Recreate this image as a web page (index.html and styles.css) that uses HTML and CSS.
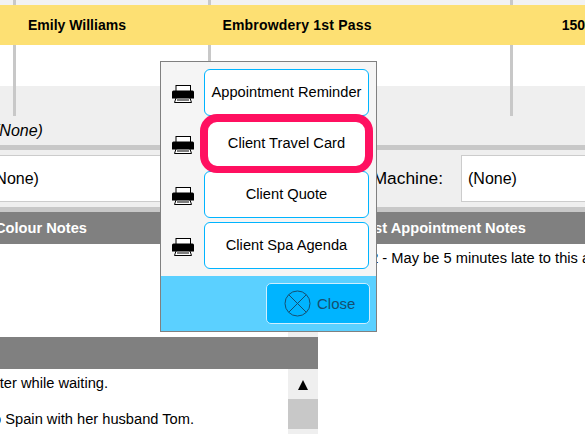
FILE: index.html
```html
<!DOCTYPE html>
<html>
<head>
  <meta charset="utf-8">
  <link rel="stylesheet" href="styles.css">
</head>
<body>
  <svg width="0" height="0" class="defs">
    <symbol id="printer" viewBox="0 0 22 18">
      <rect x="4" y="0.5" width="14.5" height="6" fill="#fff" stroke="#000"/>
      <path d="M1.5 5.5h19a1.5 1.5 0 0 1 1.5 1.5v6.500h-22v-6.500a1.500 1.500 0 0 1 1.500-1.500z" fill="#000"/>
      <path d="M4 13h14l1.500 4.500h-17z" fill="#fff" stroke="#000"/>
      <path d="M5 15h12" stroke="#000" fill="none"/>
    </symbol>
  </svg>

  <div class="page">
    <div class="timeline-line line-1"></div>
    <div class="timeline-line line-2"></div>
    <div class="timeline-line line-3"></div>

    <div class="top-strip"></div>
    <div class="appointment-band">
      <div class="band-client">Emily Williams</div>
      <div class="band-service">Embrowdery 1st Pass</div>
      <div class="band-mins">150</div>
    </div>
    <div class="white-gap"></div>

    <div class="info-panel">
      <div class="info-value">(None)</div>
    </div>

    <div class="field-row">
      <div class="field-box field-left">(None)</div>
      <div class="field-label">Machine:</div>
      <div class="field-box field-right">(None)</div>
    </div>

    <div class="notes-grid">
      <div class="notes-col">
        <div class="notes-header colour-header">Colour Notes</div>
        <div class="notes-body">
          <div class="scroll-track"></div>
        </div>
        <div class="notes-header"></div>
        <div class="notes-list">
          <div class="list-text">
            <p class="list-first">water while waiting.</p>
            <p>to Spain with her husband Tom.</p>
          </div>
          <div class="scroll-track">
            <div class="scroll-arrow"></div>
            <div class="scroll-thumb"></div>
          </div>
        </div>
      </div>
      <div class="notes-col">
        <div class="notes-header last-header">Last Appointment Notes</div>
        <div class="last-text">12 - May be 5 minutes late to this appointment</div>
      </div>
    </div>

    <div class="print-dialog">
      <div class="print-rows">
        <div class="print-row">
          <svg class="printer-icon"><use href="#printer"/></svg>
          <div class="print-btn">Appointment Reminder</div>
        </div>
        <div class="print-row">
          <svg class="printer-icon"><use href="#printer"/></svg>
          <div class="print-btn">Client Travel Card</div>
        </div>
        <div class="print-row">
          <svg class="printer-icon"><use href="#printer"/></svg>
          <div class="print-btn">Client Quote</div>
        </div>
        <div class="print-row">
          <svg class="printer-icon"><use href="#printer"/></svg>
          <div class="print-btn">Client Spa Agenda</div>
        </div>
      </div>
      <div class="dialog-footer">
        <div class="close-btn">
          <svg class="close-icon" viewBox="0 0 27 27">
            <circle cx="13.5" cy="13.5" r="12.5" fill="none" stroke="#164f70" stroke-width="1"/>
            <path d="M4.7 4.7l17.6 17.6M22.3 4.7l-17.6 17.6" fill="none" stroke="#164f70" stroke-width="1"/>
          </svg>
          <span>Close</span>
        </div>
      </div>
    </div>

    <div class="highlight"></div>
  </div>
</body>
</html>
```

FILE: styles.css
```css
* {
  margin: 0;
  padding: 0;
  box-sizing: border-box;
}

body {
  width: 585px;
  height: 434px;
  overflow: hidden;
  font-family: 'Liberation Sans', Arial, sans-serif;
  color: #000;
  background: #fff;
}

.defs {
  display: block;
  height: 0;
}

.page {
  position: relative;
  width: 585px;
  height: 434px;
  overflow: hidden;
}

.timeline-line {
  position: absolute;
  top: 0;
  width: 3px;
  height: 116px;
  background: #c8c8c8;
  z-index: 1;
}

.line-1 { left: 13px; }
.line-2 { left: 208px; }
.line-3 { left: 510px; }

.top-strip {
  height: 5px;
  background: #f2f2f2;
}

.appointment-band {
  position: relative;
  z-index: 2;
  display: flex;
  align-items: center;
  height: 40px;
  background: #fde073;
  font-size: 14px;
  font-weight: 700;
  white-space: nowrap;
}

.band-client {
  width: 195px;
  margin-left: 28px;
}

.band-service {
  width: 343px;
  padding-left: 1px;
  letter-spacing: 0.2px;
}

.white-gap {
  height: 41px;
}

.info-panel {
  display: flex;
  align-items: flex-end;
  height: 59px;
  padding-bottom: 5px;
  background: #efefef;
}

.info-value {
  margin-left: -6px;
  font-size: 16px;
  font-style: italic;
}

.field-row {
  display: flex;
  align-items: center;
  height: 67px;
  border-top: 5px solid #c8c8c8;
  border-bottom: 5px solid #c8c8c8;
  background: #efefef;
  white-space: nowrap;
}

.field-box {
  flex: none;
  height: 47px;
  padding-left: 6px;
  border: 1px solid #ccc;
  background: #fff;
  font-size: 16px;
  line-height: 45px;
}

.field-left {
  width: 240px;
  margin-left: -17px;
}

.field-label {
  flex: none;
  width: 220px;
  margin-right: 18px;
  font-size: 17.33px;
  text-align: right;
}

.field-right {
  width: 200px;
}

.notes-grid {
  display: grid;
  grid-template-columns: 318px 1fr;
}

.notes-header {
  height: 32px;
  background: #808080;
  color: #fff;
  font-size: 14.67px;
  font-weight: 700;
  line-height: 32px;
  white-space: nowrap;
}

.colour-header {
  margin-left: -5px;
}

.last-header {
  padding-left: 39px;
}

.notes-body {
  display: flex;
  justify-content: flex-end;
  height: 93px;
}

.notes-list {
  display: flex;
  height: 65px;
}

.list-text {
  flex: 1;
  margin-left: -11px;
  font-size: 14.67px;
  white-space: nowrap;
}

.list-text p {
  height: 36px;
  line-height: 28px;
}

.list-text .list-first {
  margin-left: -8px;
}

.scroll-track {
  width: 30px;
  background: #efefef;
}

.scroll-arrow {
  width: 0;
  height: 0;
  margin: 11px auto 9px;
  border-left: 5px solid transparent;
  border-right: 5px solid transparent;
  border-bottom: 10px solid #000;
}

.scroll-thumb {
  height: 30px;
  background: #c8c8c8;
}

.last-text {
  padding: 6px 0 0 44px;
  font-size: 14.67px;
  white-space: nowrap;
}

.print-dialog {
  position: absolute;
  top: 61px;
  left: 160px;
  z-index: 3;
  width: 217px;
  height: 271px;
  border: 1px solid #808080;
  background: #f5f5f5;
}

.print-rows {
  display: flex;
  flex-direction: column;
  gap: 4px;
  height: 214px;
  padding-top: 7px;
}

.print-row {
  display: flex;
  align-items: center;
  gap: 10px;
  padding-left: 11px;
}

.printer-icon {
  width: 22px;
  height: 18px;
  margin-top: 3px;
}

.print-btn {
  width: 165px;
  height: 47px;
  border: 1px solid #00b4ff;
  border-radius: 6px;
  background: #fff;
  font-size: 14.67px;
  line-height: 44px;
  text-align: center;
}

.dialog-footer {
  display: flex;
  justify-content: flex-end;
  height: 55px;
  padding: 7px 6px 7px 0;
  background: #5bd0ff;
}

.close-btn {
  display: flex;
  align-items: center;
  gap: 6px;
  width: 104px;
  height: 41px;
  padding-left: 17px;
  border: 1px solid #cdeeff;
  border-radius: 5px;
  background: #00b4ff;
  color: #164f70;
  font-size: 15px;
}

.close-icon {
  width: 27px;
  height: 27px;
}

.highlight {
  position: absolute;
  top: 114px;
  left: 200px;
  z-index: 4;
  width: 173px;
  height: 59px;
  border: 8px solid #ff1060;
  border-bottom-width: 7px;
  border-radius: 17px;
}
```
